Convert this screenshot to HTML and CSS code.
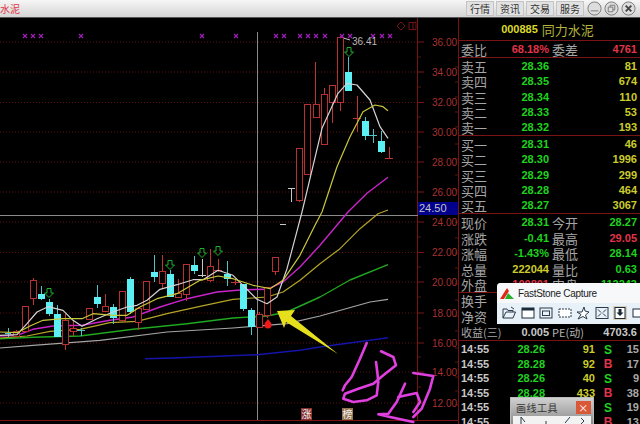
FILE: index.html
```html
<!DOCTYPE html>
<html lang="zh-CN">
<head>
    <meta charset="UTF-8">
    <meta name="viewport" content="width=device-width, initial-scale=1.0">
    <title>同力水泥</title>
    <link rel="stylesheet" href="styles.css">
</head>
<body>

<div class="topbar">
    <span class="stock-title">水泥</span>
    <div class="tabs">
        <span class="tab">行情</span>
        <span class="tab">资讯</span>
        <span class="tab">交易</span>
        <span class="tab">服务</span>
    </div>
    <div class="win-buttons">
        <svg class="win-btn" viewBox="0 0 16 16"><circle cx="8" cy="8" r="7"/><path d="M4 10.5H12"/></svg>
        <svg class="win-btn" viewBox="0 0 16 16"><circle cx="8" cy="8" r="7"/><path d="M4.5 6.5H9.5V11.5H4.5ZM6.5 6.5V4.5H11.5V9.5H9.5"/></svg>
        <svg class="win-btn" viewBox="0 0 16 16"><circle cx="8" cy="8" r="7"/><path class="win-x" d="M5 5L11 11M11 5L5 11"/></svg>
    </div>
</div>

<div class="main">
    <svg class="chart" viewBox="0 18 458 406" width="458" height="406">
        <defs>
            <path id="down" class="signal" d="M-2 -4.5H2V0H4.5L0 4.5L-4.5 0H-2Z"/>
            <path id="mark" class="mark" d="M-2 -2L2 2M2 -2L-2 2"/>
        </defs>

        <!-- grid -->
        <path class="grid" d="M0 42H417M0 72H417M0 102.500H417M0 132H417M0 162H417M0 192H417M0 222H417M0 252.500H417M0 282H417M0 313H417M0 343H417M0 372H417M0 403H417"/>
        <path class="axis" d="M417.500 18V420M0 420.500H458M417 42H424M417 72H424M417 102.500H424M417 132H424M417 162H424M417 192H424M417 222H424M417 252.500H424M417 282H424M417 313H424M417 343H424M417 372H424M417 403H424"/>
        <path class="axis-minor" d="M417 57H421M417 87H421M417 117H421M417 147H421M417 177H421M417 237H421M417 267H421M417 297H421M417 328H421M417 357H421M417 387H421"/>
        <path class="axis-minor" d="M455 67H458M455 82H458M455 97H458M455 112H458M455 127H458M455 144H458M455 159H458M455 175H458M455 190H458M455 222H458M455 238H458M455 253H458M455 268H458M455 284H458M455 300H458M455 316H458M455 331H458M455 348H458M455 362H458M455 377H458M455 391H458M455 405H458"/>

        <!-- crosshair -->
        <path class="cross" d="M257.500 32V420M0 215.500H418"/>
        <rect class="cross-box" x="418" y="202" width="40" height="13"/>
        <text class="cross-label" x="419" y="212">24.50</text>

        <g class="price">
            <text x="432" y="46">36.00</text>
            <text x="432" y="76">34.00</text>
            <text x="432" y="106">32.00</text>
            <text x="432" y="136">30.00</text>
            <text x="432" y="166">28.00</text>
            <text x="432" y="196">26.00</text>
            <text x="432" y="226">24.00</text>
            <text x="432" y="256">22.00</text>
            <text x="432" y="286">20.00</text>
            <text x="432" y="317">18.00</text>
            <text x="432" y="347">16.00</text>
            <text x="432" y="376">14.00</text>
            <text x="432" y="407">12.00</text>
        </g>

        <!-- moving averages -->
        <polyline class="ma ma-blue" points="145,358.700 173,358 257,354.700 300,350.300 320,347 388,337.700"/>
        <polyline class="ma ma-grey" points="0,348 33,345.300 100,340.300 167,332 233,328 287,323.700 320,316 370,302 388,299.300"/>
        <polyline class="ma ma-green" points="0,338.700 33,337.300 80,336 133,329.300 187,323.700 233,318 267,316 287,312 320,297 350,280 388,264.700"/>
        <polyline class="ma ma-dim" points="0,338 27,336 50,331.300 80,329.300 110,322.700 137,321.300 167,313.700 200,306.300 233,299.300 267,297 283,292 300,280.300 320,263.700 340,248.700 360,228.700 378,213.700 388,210"/>
        <polyline class="ma ma-magenta" points="0,336 17,335.300 33,329.300 53,326 82,325.300 110,320.300 133,317 160,307 187,298.700 217,292 243,289.700 267,289.300 283,282 300,267 320,245.300 348,212 367,193.300 388,177.300"/>

        <!-- candles -->
        <path class="wick-up" d="M16.500 330V337M33.500 278V305M65.500 314V350M73.500 320V336M105.500 294V312M138.500 307V330M162.500 255V288M178.500 279V297M186.500 264V301M210.500 249V282M218.500 259V272M235.500 279V285M259.500 312V327M267.500 287V318M275.500 257V275M299.500 148V202M315.500 62V117M324.500 88V144M332.500 85V123M340.500 37V111M357.500 96V132M389.500 147V159M353 118.500H361M385 158.500H393M231 282.500H239M214 270.500H222"/>
        <path class="wick-down" d="M8.500 328V337M5 333.500H11M41.500 286V300M49.500 299V316M57.500 305V337M81.500 328V336M77 330.500H85M97.500 285V308M113.500 304V324M130.500 277V314M154.500 255V282M170.500 270V297M194.500 256V274M227.500 261V286M243.500 284V311M251.500 308V335M348.500 57V91M365.500 117V140M373.500 129V143M369 135.500H377M381.500 131V153"/>
        <path class="wick-white" d="M202.500 259V277M198 275.500H206M291.500 188V202M288 188.500H295M280 224.500H286M340 37L350 40"/>

        <g class="up">
            <rect x="13" y="331" width="6" height="5"/>
            <rect x="22" y="306" width="6" height="25"/>
            <rect x="30" y="280" width="6" height="18"/>
            <rect x="62" y="320" width="6" height="24"/>
            <rect x="70" y="328" width="6" height="3"/>
            <rect x="86" y="308" width="6" height="11"/>
            <rect x="102" y="306" width="6" height="5"/>
            <rect x="119" y="291" width="6" height="29"/>
            <rect x="135" y="308" width="6" height="14"/>
            <rect x="143" y="281" width="6" height="28"/>
            <rect x="159" y="271" width="6" height="12"/>
            <rect x="175" y="293" width="6" height="4"/>
            <rect x="183" y="264" width="6" height="30"/>
            <rect x="207" y="266" width="6" height="14"/>
            <rect x="256" y="314" width="6" height="13"/>
            <rect x="264" y="287" width="6" height="28"/>
            <rect x="272" y="257" width="6" height="14"/>
            <rect x="296" y="148" width="6" height="52"/>
            <rect x="304" y="104" width="6" height="70"/>
            <rect x="313" y="104" width="6" height="13"/>
            <rect x="321" y="94" width="6" height="50"/>
            <rect x="329" y="85" width="6" height="17"/>
            <rect x="337" y="37" width="6" height="65"/>
        </g>
        <g class="down">
            <rect x="38" y="294" width="7" height="5"/>
            <rect x="46" y="302" width="7" height="12"/>
            <rect x="54" y="314" width="7" height="23"/>
            <rect x="94" y="297" width="7" height="7"/>
            <rect x="110" y="307" width="7" height="11"/>
            <rect x="127" y="279" width="7" height="33"/>
            <rect x="151" y="272" width="7" height="5"/>
            <rect x="167" y="274" width="7" height="23"/>
            <rect x="191" y="265" width="7" height="6"/>
            <rect x="224" y="274" width="7" height="5"/>
            <rect x="240" y="284" width="7" height="25"/>
            <rect x="248" y="310" width="7" height="17"/>
            <rect x="345" y="72" width="7" height="19"/>
            <rect x="362" y="121" width="7" height="15"/>
            <rect x="378" y="141" width="7" height="11"/>
        </g>

        <polyline class="ma ma-white" points="0,335.300 17,334.700 27,323.700 37,312 48,306.700 63,310.300 73,320.300 82,326.300 97,318.700 113,312 127,307 137,305.300 147,300.300 160,289.300 177,284.700 193,279.700 203,279.700 218,270.300 233,275.300 243,285.300 257,299.300 267,303.700 277,297 287,268.700 295,238.700 302,212 322,128.300 338,93.300 347,83.300 357,85 370,100 380,126.700 388,138.300"/>
        <polyline class="ma ma-yellow" points="0,332 17,332.700 30,326 43,320.300 63,318.700 82,318.700 93,313.700 113,315.300 127,315.300 140,307 157,298.700 177,293.700 200,280.300 218,276 233,278.700 253,285.300 270,288.700 283,280.300 300,255.300 315,225.300 322,212 337,166.700 350,136.700 363,111.700 375,105 383,106.700 388,110.700"/>

        <!-- signals -->
        <use href="#down" x="49" y="293"/>
        <use href="#down" x="170" y="265"/>
        <use href="#down" x="202" y="253"/>
        <use href="#down" x="218" y="251"/>
        <use href="#down" x="349" y="52"/>
        <circle class="dot" cx="268" cy="325" r="3.500"/>
        <path class="dot" d="M268 319L271 323H265Z"/>

        <use href="#mark" x="25" y="36"/>
        <use href="#mark" x="33" y="36"/>
        <use href="#mark" x="41" y="36"/>
        <use href="#mark" x="81" y="36"/>
        <use href="#mark" x="202" y="36"/>
        <use href="#mark" x="236" y="36"/>
        <use href="#mark" x="276" y="36"/>
        <use href="#mark" x="284" y="36"/>
        <use href="#mark" x="300" y="36"/>
        <use href="#mark" x="308" y="36"/>
        <use href="#mark" x="316" y="36"/>
        <use href="#mark" x="325" y="36"/>
        <use href="#mark" x="342" y="36"/>
        <use href="#mark" x="350" y="36"/>
        <use href="#mark" x="373" y="36"/>
        <use href="#mark" x="382" y="36"/>
        <use href="#mark" x="390" y="36"/>

        <text class="peak" x="352" y="45">36.41</text>
        <path class="corner-icon" d="M401 22L405 26L401 30L397 26ZM409 22.500H416V29.500H409ZM413 22.500V29.500"/>

        <rect class="badge-red" x="301" y="408" width="11" height="12"/>
        <text class="badge-text" x="301.500" y="418">涨</text>
        <rect class="badge-tan" x="342" y="408" width="11" height="12"/>
        <text class="badge-text" x="342.500" y="418">榜</text>

        <!-- hand annotations -->
        <polygon class="arrow" points="277,311 295,310 291,316 338,354 286,322 284,328"/>
        <g class="ink">
            <polyline points="366.700,343 360,358.700 351.700,377 345,385.300 342.700,390.300"/>
            <polyline points="381,351.300 393.300,357 396,365.300 383.300,375.300 373.300,383.700 358.300,388.700 345,393.700 343.300,398.700 353.300,402 366.700,400.300 376.700,395.300 378.300,382 377.300,372 376,362"/>
            <polyline points="413.300,373 433.300,376 430,388.700 421.700,408.700 413.300,417"/>
            <polyline points="405,383.700 396.700,402 388.300,413.700 378.300,414.300 390,417 413.300,422"/>
            <polyline points="398.300,397 416.700,393 420,402 413.300,412"/>
        </g>
    </svg>

    <div class="panel">
        <div class="stock-head">
            <span class="code">000885</span>
            <span class="name">同力水泥</span>
        </div>

        <div class="section commit">
            <div class="row">
                <span class="label">委比</span><span class="num red">68.18%</span>
                <span class="label">委差</span><span class="num red">4761</span>
            </div>
        </div>

        <div class="section book">
            <div class="row"><span class="label">卖五</span><span class="num green">28.36</span><span></span><span class="num yellow">81</span></div>
            <div class="row"><span class="label">卖四</span><span class="num green">28.35</span><span></span><span class="num yellow">674</span></div>
            <div class="row"><span class="label">卖三</span><span class="num green">28.34</span><span></span><span class="num yellow">110</span></div>
            <div class="row"><span class="label">卖二</span><span class="num green">28.33</span><span></span><span class="num yellow">53</span></div>
            <div class="row"><span class="label">卖一</span><span class="num green">28.32</span><span></span><span class="num yellow">193</span></div>
        </div>

        <div class="section book">
            <div class="row"><span class="label">买一</span><span class="num green">28.31</span><span></span><span class="num yellow">46</span></div>
            <div class="row"><span class="label">买二</span><span class="num green">28.30</span><span></span><span class="num yellow">1996</span></div>
            <div class="row"><span class="label">买三</span><span class="num green">28.29</span><span></span><span class="num yellow">299</span></div>
            <div class="row"><span class="label">买四</span><span class="num green">28.28</span><span></span><span class="num yellow">464</span></div>
            <div class="row"><span class="label">买五</span><span class="num green">28.27</span><span></span><span class="num yellow">3067</span></div>
        </div>

        <div class="section quote">
            <div class="row"><span class="label">现价</span><span class="num green">28.31</span><span class="label">今开</span><span class="num green">28.27</span></div>
            <div class="row"><span class="label">涨跌</span><span class="num green">-0.41</span><span class="label">最高</span><span class="num red">29.05</span></div>
            <div class="row"><span class="label">涨幅</span><span class="num green">-1.43%</span><span class="label">最低</span><span class="num green">28.14</span></div>
            <div class="row"><span class="label">总量</span><span class="num yellow">222044</span><span class="label">量比</span><span class="num green">0.63</span></div>
            <div class="row"><span class="label">外盘</span><span class="num red">100801</span><span class="label">内盘</span><span class="num green">112243</span></div>
        </div>

        <div class="section finance">
            <div class="row"><span class="label">换手</span></div>
            <div class="row"><span class="label">净资</span></div>
            <div class="row"><span class="label label-wide">收益(三)</span><span class="num white">0.005</span><span class="label-pe">PE(动)</span><span class="num white">4703.6</span></div>
        </div>

        <div class="trades">
            <div class="trade"><span class="num white">14:55</span><span class="num green">28.26</span><span class="num yellow">91</span><span class="side green">S</span><span class="num grey">15</span></div>
            <div class="trade"><span class="num white">14:55</span><span class="num green">28.28</span><span class="num yellow">92</span><span class="side red">B</span><span class="num grey">17</span></div>
            <div class="trade"><span class="num white">14:55</span><span class="num green">28.26</span><span class="num yellow">40</span><span class="side green">S</span><span class="num grey">9</span></div>
            <div class="trade"><span class="num white">14:55</span><span class="num green">28.28</span><span class="num yellow">433</span><span class="side red">B</span><span class="num grey">38</span></div>
            <div class="trade"><span class="num white">14:55</span><span></span><span></span><span class="side green">S</span><span class="num grey">19</span></div>
            <div class="trade"><span class="num white">14:55</span><span></span><span></span><span class="side red">B</span><span class="num grey">13</span></div>
        </div>
    </div>
</div>

<div class="capture-win">
    <div class="capture-title">
        <svg class="capture-logo" viewBox="0 0 14 12">
            <path class="logo-red" d="M0 12L7 1L9 4L4 12Z"/>
            <path class="logo-green" d="M8 6L14 12H5Z"/>
        </svg>
        <span>FastStone Capture</span>
    </div>
    <div class="capture-tools">
        <svg class="tool" viewBox="0 0 14 14"><path class="ico-line" d="M1 12V3H5L6 4.500H11V6M1 12L4 6H13.500L11 12ZM9 1L12 3"/></svg>
        <svg class="tool" viewBox="0 0 14 14"><rect class="ico-win" x="1" y="2" width="12" height="10"/><path class="ico-bar" d="M1 2H13V4.500H1Z"/></svg>
        <svg class="tool" viewBox="0 0 14 14"><rect class="ico-line" x="1" y="2" width="12" height="10"/><rect class="ico-line" x="3.500" y="5" width="7" height="4.500"/></svg>
        <svg class="tool" viewBox="0 0 14 14"><rect class="ico-dash" x="1" y="3" width="12" height="8"/></svg>
        <svg class="tool" viewBox="0 0 14 14"><path class="ico-star" d="M8 1L9 5L13 6L9.500 9L11 13L7 10.500L2 13L5 8.500L1 6L6 6Z"/></svg>
        <svg class="tool" viewBox="0 0 14 14"><rect class="ico-line" x="1" y="1.500" width="12" height="11"/><path class="ico-line" d="M3 3.500L6 6.500M11 3.500L8 6.500M3 10.500L6 7.500M11 10.500L8 7.500"/></svg>
        <svg class="tool tool-on" viewBox="0 0 14 14"><rect class="ico-win" x="2" y="1.500" width="10" height="11"/><path class="ico-bar" d="M5.500 3H8.500V6.500H10.500L7 10L3.500 6.500H5.500Z"/></svg>
        <svg class="tool" viewBox="0 0 14 14"><rect class="ico-win" x="1" y="3" width="12" height="8"/></svg>
    </div>
</div>

<div class="draw-win">
    <div class="draw-title">
        <span>画线工具</span>
        <span class="draw-close">×</span>
    </div>
    <div class="draw-tools">
        <svg viewBox="0 0 72 8" width="72" height="8"><path class="ico-line" d="M8 1V8M8 1L12 6M33 5V8M52 7L57 1M68 2L71 5L68 8"/></svg>
    </div>
</div>

</body>
</html>
```

FILE: styles.css
```css
body {
    margin: 0;
    width: 640px;
    height: 424px;
    overflow: hidden;
    position: relative;
    background-color: #000;
    font-family: "Liberation Sans", "Noto Sans CJK SC", sans-serif;
}

/* top bar */
.topbar {
    box-sizing: border-box;
    height: 18px;
    display: flex;
    align-items: center;
    background: linear-gradient(#f6f6f6, #d4d4d4);
    border-bottom: 1px solid #555;
}
.stock-title {
    color: #e0364a;
    font-size: 10px;
    font-family: "Noto Sans CJK SC", sans-serif;
}
.tabs {
    display: flex;
    gap: 2px;
    margin-left: 446px;
}
.tab {
    width: 26px;
    height: 13px;
    line-height: 13px;
    text-align: center;
    font-size: 10px;
    font-family: "Noto Sans CJK SC", sans-serif;
    color: #333;
    background-color: #e2e2e2;
    border: 1px solid #c4c4c4;
}
.win-buttons {
    display: flex;
    gap: 2px;
    margin-left: 3px;
}
.win-btn {
    width: 15px;
    height: 15px;
    fill: #ddd;
    stroke: #777;
    stroke-width: 1;
}
.win-x {
    stroke: #444;
    stroke-width: 2;
}

/* chart */
.main {
    display: flex;
    height: 406px;
}
.chart {
    flex: none;
    display: block;
}
.grid {
    stroke: #5e1010;
    stroke-dasharray: 1 2;
    fill: none;
}
.axis {
    stroke: #7a1414;
    fill: none;
}
.axis-minor {
    stroke: #5e1010;
    fill: none;
}
.cross {
    stroke: #8a8a8a;
    fill: none;
}
.cross-box {
    fill: #00008c;
}
.cross-label {
    fill: #c4c4c4;
    font-size: 11px;
}
.price text {
    fill: #a83232;
    font-size: 10px;
}
.ma {
    fill: none;
    stroke-width: 1.200;
    stroke-linejoin: round;
}
.ma-white { stroke: #d4d4d4; }
.ma-yellow { stroke: #c8c83c; }
.ma-dim { stroke: #b4a428; }
.ma-magenta { stroke: #c824c8; stroke-width: 1.400; }
.ma-green { stroke: #20a820; stroke-width: 1.400; }
.ma-grey { stroke: #a4a4a4; }
.ma-blue { stroke: #1414a8; stroke-width: 1.400; }

.wick-up { stroke: #c03434; fill: none; }
.wick-down { stroke: #4cc4c8; fill: none; }
.wick-white { stroke: #c8c8c8; fill: none; }
.up rect {
    fill: #000;
    stroke: #b83030;
    shape-rendering: crispEdges;
}
.down rect {
    fill: #5cf0f4;
}
.signal {
    fill: none;
    stroke: #20b030;
    stroke-width: 1;
}
.mark {
    fill: none;
    stroke: #a020b8;
    stroke-width: 1.200;
}
.dot {
    fill: #f01818;
}
.peak {
    fill: #b8b8b8;
    font-size: 10px;
}
.corner-icon {
    fill: none;
    stroke: #6e1616;
}
.badge-red { fill: #8a3232; }
.badge-tan { fill: #94734e; }
.badge-text {
    fill: #f0f0f0;
    font-size: 10px;
    font-family: "Noto Sans CJK SC", sans-serif;
}
.arrow {
    fill: #e6e01c;
}
.ink polyline {
    fill: none;
    stroke: #e040e0;
    stroke-width: 2.600;
    stroke-linecap: round;
    stroke-linejoin: round;
}

/* quote panel */
.panel {
    flex: none;
    width: 182px;
    border-left: 1px solid #7a1414;
    box-sizing: border-box;
}
.stock-head {
    box-sizing: border-box;
    height: 23px;
    display: flex;
    align-items: center;
    justify-content: center;
    gap: 4px;
    padding-right: 4px;
    border-bottom: 1px solid #7a1414;
}
.code {
    color: #d8d82c;
    font-size: 11px;
    font-weight: bold;
}
.name {
    color: #b4b43c;
    font-size: 13px;
    font-family: "Noto Sans CJK SC", sans-serif;
}
.section {
    box-sizing: border-box;
    border-bottom: 1px solid #7a1414;
}
.commit { height: 17px; }
.book { height: 78px; padding-top: 1px; }
.quote { height: 79px; padding-top: 1px; }
.finance { height: 48px; }
.commit .row { height: 16px; }
.row {
    height: 15.300px;
    display: grid;
    grid-template-columns: 44px 44px 29px 59px;
    padding-left: 2px;
    align-items: center;
}
.quote .row, .finance .row { height: 15.500px; }
.label {
    color: #a6a6a6;
    font-size: 13px;
    line-height: 15px;
    white-space: nowrap;
    font-family: "Noto Sans CJK SC", sans-serif;
}
.row .label:nth-child(3) {
    padding-left: 3px;
}
.label-wide {
    font-size: 11px;
}
.label-pe {
    color: #b4b4b4;
    font-size: 11px;
    padding-left: 3px;
    white-space: nowrap;
    font-family: "Noto Sans CJK SC", sans-serif;
}
.num {
    font-size: 11px;
    font-weight: bold;
    line-height: 15px;
    text-align: right;
    white-space: nowrap;
}
.green { color: #1ed21e; }
.yellow { color: #cccc2c; }
.red { color: #e0344a; }
.white { color: #c8c8c8; }
.grey { color: #a8a8a8; }

.trades {
    padding-top: 1px;
}
.trade {
    height: 14.500px;
    display: grid;
    grid-template-columns: 30px 54px 50px 26px 18px;
    padding-left: 2px;
    align-items: center;
}
.trade .num:first-child {
    text-align: left;
}
.side {
    font-size: 12px;
    font-weight: bold;
    line-height: 14px;
    text-align: center;
}

/* floating windows */
.capture-win {
    position: absolute;
    left: 497px;
    top: 283px;
    width: 150px;
    height: 41px;
    background-color: #e8f0f8;
    border-top-left-radius: 4px;
    overflow: hidden;
}
.capture-title {
    height: 20px;
    display: flex;
    align-items: center;
    gap: 4px;
    padding-left: 3px;
    background-color: #f6f8fa;
    font-size: 10px;
    letter-spacing: -0.300px;
    color: #222;
}
.capture-logo {
    width: 14px;
    height: 12px;
}
.logo-red { fill: #e02818; }
.logo-green { fill: #28b028; }
.capture-tools {
    display: flex;
    gap: 4.500px;
    padding: 3px 0 0 5px;
}
.tool {
    flex: none;
    width: 14px;
    height: 14px;
}
.tool-on {
    background-color: #d8d0b8;
}
.ico-line {
    fill: none;
    stroke: #2a3a4a;
    stroke-width: 1;
}
.ico-win {
    fill: #fff;
    stroke: #1a2a3a;
}
.ico-bar {
    fill: #1a2a3a;
}
.ico-dash {
    fill: #fff;
    stroke: #2a3a4a;
    stroke-dasharray: 2 1;
}
.ico-star {
    fill: #fff;
    stroke: #2a3a4a;
}
.draw-win {
    position: absolute;
    left: 510px;
    top: 397px;
    width: 84px;
    height: 27px;
    box-sizing: border-box;
    background: linear-gradient(#d0d0d0, #8c8c8c);
    border: 1px solid #bbb;
    border-bottom: 0;
}
.draw-title {
    height: 18px;
    display: flex;
    align-items: center;
    justify-content: space-between;
    padding: 0 2px 0 5px;
    font-size: 10px;
    letter-spacing: 0.500px;
    color: #333;
    font-family: "Noto Sans CJK SC", sans-serif;
}
.draw-close {
    width: 15px;
    height: 13px;
    line-height: 13px;
    text-align: center;
    font-size: 10px;
    color: #fff;
    background-color: #d85838;
}
.draw-tools {
    margin: 0 2px;
    height: 8px;
    background-color: #f2f2f2;
}
.draw-tools svg {
    display: block;
}
```
